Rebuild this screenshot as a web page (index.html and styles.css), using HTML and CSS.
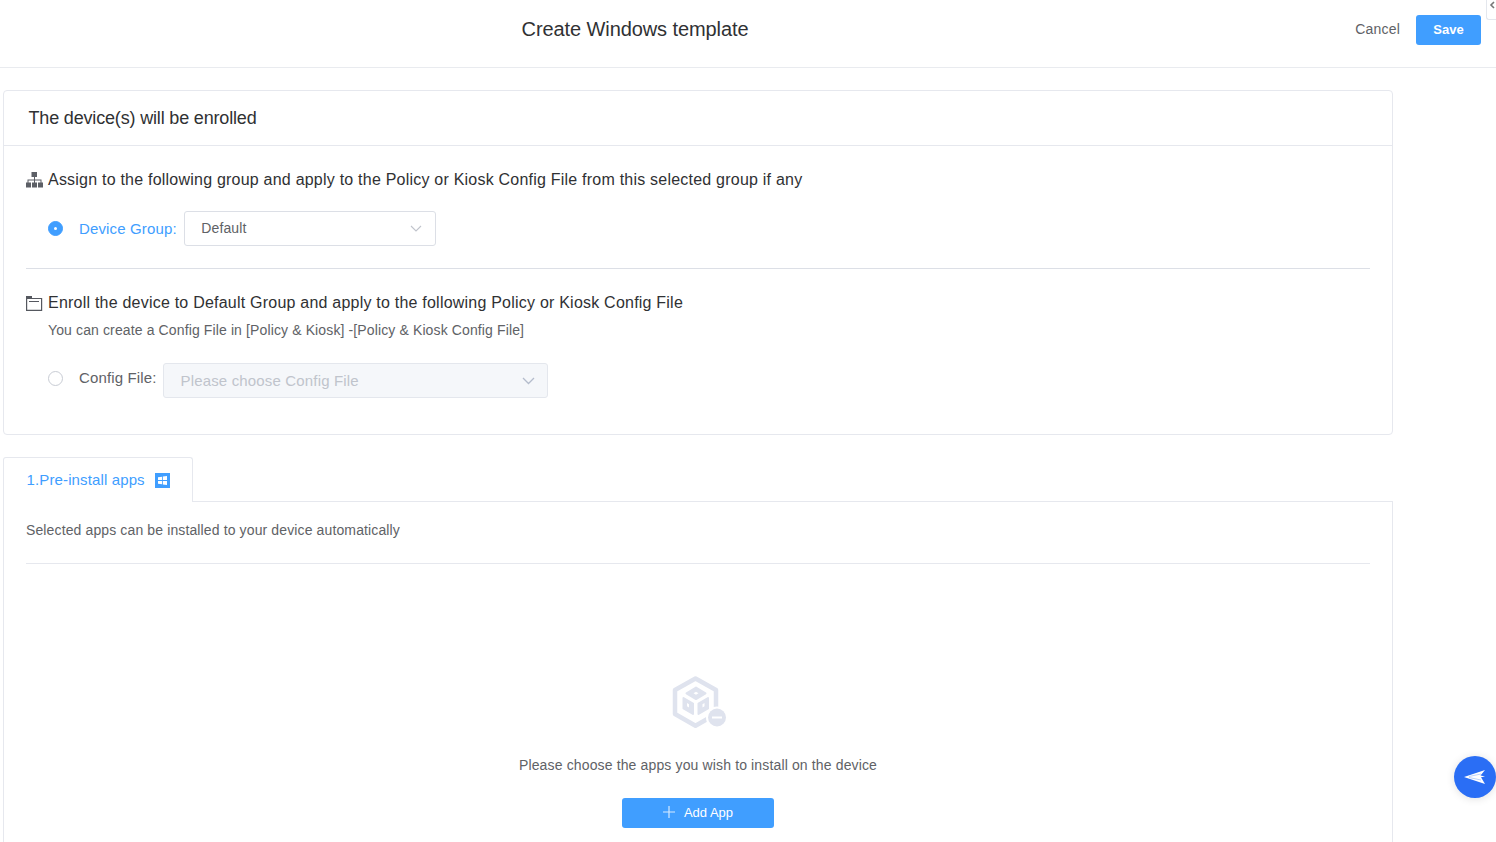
FILE: index.html
```html
<!DOCTYPE html>
<html lang="en">
<head>
<meta charset="utf-8">
<title>Create Windows template</title>
<link rel="stylesheet" href="styles.css">
</head>
<body>
<header class="topbar">
  <h1 class="title">Create Windows template</h1>
  <div class="actions">
    <a class="cancel">Cancel</a>
    <button class="btn save">Save</button>
  </div>
</header>
<div class="corner"><svg width="6" height="8" viewBox="0 0 6 8"><path d="M5 1 2 4l3 3" fill="none" stroke="#777" stroke-width="1.6"/></svg></div>
<main class="page">
  <section class="card">
    <h2 class="card-head">The device(s) will be enrolled</h2>
    <div class="card-body">
      <div class="block block-group">
        <div class="opt-title">
          <svg class="opt-icon" width="17" height="16" viewBox="0 0 17 16"><path d="M5.500 0H11v5H5.500zM8 5h1v2.500h6.500V10.500h-1V8.500H9v2H8v-2H2.500v2h-1V7.500H8zM0 10.500h5v5H0zM6 10.500h5v5H6zM12 10.500h5v5h-5z" fill="#5c5f66"/></svg>
          <span>Assign to the following group and apply to the Policy or Kiosk Config File from this selected group if any</span>
        </div>
        <div class="field field-group">
          <span class="radio radio-on"></span>
          <label class="label label-on">Device Group:</label>
          <div class="select select-group">
            <span class="select-value">Default</span>
            <svg width="12" height="7" viewBox="0 0 12 7"><path d="M1 1l5 5 5-5" fill="none" stroke="#c0c4cc" stroke-width="1.100"/></svg>
          </div>
        </div>
      </div>
      <div class="block block-config">
        <div class="opt-title">
          <svg class="opt-icon" width="17" height="15" viewBox="0 0 17 15"><path d="M.6 2.500h15v11.900H.6z" fill="none" stroke="#55585f" stroke-width="1.200"/><path d="M0 0h6v3H0zM3 5h10v1.100H3z" fill="#55585f"/></svg>
          <span>Enroll the device to Default Group and apply to the following Policy or Kiosk Config File</span>
        </div>
        <p class="hint">You can create a Config File in [Policy &amp; Kiosk] -[Policy &amp; Kiosk Config File]</p>
        <div class="field field-config">
          <span class="radio"></span>
          <label class="label">Config File:</label>
          <div class="select select-config">
            <span>Please choose Config File</span>
            <svg width="13" height="8" viewBox="0 0 13 8"><path d="M1 1l5.500 5.500L12 1" fill="none" stroke="#b4bccc" stroke-width="1.300"/></svg>
          </div>
        </div>
      </div>
    </div>
  </section>
  <div class="tabs">
    <div class="tab">
      <span class="tab-text">1.Pre-install apps</span>
      <svg class="win" width="15" height="15" viewBox="0 0 15 15"><rect width="15" height="15" fill="#409eff"/><path d="M3 4.300 7 3.700v3.400H3zM7.800 3.600 12 3v4.100H7.800zM3 7.900h4v3.400l-4-.6zM7.800 7.900H12V12l-4.200-.6z" fill="#fff"/></svg>
    </div>
  </div>
  <section class="panel">
    <p class="panel-desc">Selected apps can be installed to your device automatically</p>
    <div class="empty">
      <svg class="empty-icon" width="55" height="53" viewBox="0 0 55 53">
        <path d="M23.500 2.500 3 14v24l20.500 11.700L44 38V14z" fill="none" stroke="#dfe3ee" stroke-width="4.500" stroke-linejoin="round"/>
        <path d="M24 11.500l9.500 5.800-9.500 5.800-9.500-5.800z" fill="#dfe3ee" stroke="#dfe3ee" stroke-width="2" stroke-linejoin="round"/>
        <path d="M11.500 22l9.500 5.500V38l-9.500-5.500zM36 22l-9.500 5.500V38l9.500-5.500z" fill="#dfe3ee" stroke="#dfe3ee" stroke-width="2" stroke-linejoin="round"/>
        <path d="M24 15.800l2.500 1.500-2.500 1.500-2.500-1.500zM15 27l2 1.200v3.300l-2-1.200zM32.500 27l-2 1.200v3.300l2-1.200z" fill="#fff"/>
        <circle cx="45" cy="41.500" r="11" fill="#fff"/>
        <circle cx="45" cy="41.500" r="9" fill="#dfe3ee"/>
        <rect x="40" y="40.500" width="10" height="2" fill="#fff"/>
      </svg>
      <p class="empty-text">Please choose the apps you wish to install on the device</p>
      <button class="btn add">
        <svg width="12" height="12" viewBox="0 0 12 12"><path d="M6 0v12M0 6h12" stroke="#d5e9ff" stroke-width="1.200"/></svg>
        <span>Add App</span>
      </button>
    </div>
  </section>
</main>
<div class="fab">
  <svg width="24" height="18" viewBox="0 0 24 18"><path d="M1 9 22 2 17.500 7.500l4.500 1-4 .8L22 16z" fill="#fff"/><path d="M6 8.500 18 6M6 9.500l12 2.500" stroke="#7aa5f8" stroke-width=".5"/></svg>
</div>
</body>
</html>
```
FILE: styles.css
```css
* { box-sizing: border-box; }
html, body { margin: 0; height: 842px; overflow: hidden; background: #fff; }
body { font-family: "Liberation Sans", Arial, sans-serif; color: #303133; position: relative; }
p, h1, h2 { margin: 0; font-weight: 400; }

.topbar { height: 68px; border-bottom: 1px solid #e9ebef; display: flex; align-items: center; justify-content: flex-end; padding: 0 15px 8px 0; position: relative; }
.title { position: absolute; left: 0; width: 1270px; top: 17px; text-align: center; font-size: 20px; line-height: 24px; letter-spacing: -.09px; color: #303133; }
.actions { display: flex; align-items: center; gap: 16px; }
.cancel { font-size: 14px; letter-spacing: .2px; color: #606266; padding-bottom: 2px; }
.btn { border: 0; background: #409eff; color: #fff; font-family: inherit; border-radius: 3px; padding: 0; }
.save { width: 65px; height: 30px; font-size: 13px; font-weight: 700; }

.corner { position: absolute; right: 0; top: -10px; width: 10px; height: 30px; background: #fff; border: 1px solid #e4e7ed; border-right: 0; border-radius: 3px 0 0 3px; display: flex; align-items: center; justify-content: center; }

.page { padding: 22px 103px 0 3px; }
.card { border: 1px solid #e6e8ee; border-radius: 4px; height: 345px; }
.card-head { height: 55px; border-bottom: 1px solid #e6e8ee; padding-left: 24.500px; font-size: 18px; letter-spacing: -.17px; line-height: 54px; color: #303133; }
.card-body { padding: 0 22px; }
.block-group { height: 123px; border-bottom: 1px solid #dcdfe6; padding-top: 24px; }
.block-config { padding-top: 24px; }
.opt-title { display: flex; align-items: center; gap: 5px; font-size: 16px; letter-spacing: .22px; line-height: 20px; color: #303133; }
.opt-icon { flex: none; }
.hint { margin: 7px 0 0 22px; font-size: 14px; letter-spacing: .125px; line-height: 20px; color: #606266; }
.field { display: flex; align-items: center; }
.field-group { margin: 21px 0 0 22px; }
.field-config { margin: 23px 0 0 22px; }
.radio { width: 15px; height: 15px; border-radius: 50%; border: 1px solid #c8ccd4; background: #fff; flex: none; margin-right: 16px; }
.radio-on { background: #409eff; border-color: #409eff; position: relative; }
.radio-on::after { content: ""; position: absolute; left: 5px; top: 5px; width: 3px; height: 3px; border-radius: 50%; background: #fff; }
.label { font-size: 15px; letter-spacing: .14px; color: #606266; }
.label-on { color: #409eff; }
.select { display: flex; align-items: center; justify-content: space-between; border: 1px solid #dcdfe6; border-radius: 3px; background: #fff; }
.select-group { width: 252px; height: 35px; margin-left: 7px; padding: 0 13px 0 16.500px; font-size: 14px; letter-spacing: .14px; color: #606266; }
.select-value { padding-bottom: 2px; }
.select-config { width: 385px; height: 35px; margin-left: 6px; padding: 0 12px 0 17px; font-size: 15px; letter-spacing: .16px; color: #c0c4cc; background: #f5f7fa; border-color: #e4e7ed; }
.field-config .radio { position: relative; top: -2px; }
.field-config .label { position: relative; top: -3px; }

.tabs { margin-top: 22px; display: flex; height: 45px; }
.tab { width: 190px; height: 45px; border: 1px solid #e6e8ee; border-bottom: 0; border-radius: 3px 3px 0 0; background: #fff; display: flex; align-items: center; gap: 10px; padding-left: 22.500px; font-size: 15px; letter-spacing: .13px; color: #409eff; position: relative; z-index: 1; }
.tab-text { position: relative; top: -1px; }
.win { flex: none; }
.panel { border: 1px solid #e6e8ee; border-top: 1px solid #e6e8ee; margin-top: -1px; padding: 0 22px; height: 400px; }
.panel-desc { height: 62px; border-bottom: 1px solid #e6e8ee; font-size: 14px; letter-spacing: .125px; line-height: 56px; color: #606266; }
.empty { display: flex; flex-direction: column; align-items: center; padding-top: 112px; }
.empty-icon { margin-left: 3px; display: block; }
.empty-text { margin-top: 26px; font-size: 14px; letter-spacing: .14px; line-height: 20px; color: #606266; }
.add { margin-top: 23px; width: 152px; height: 30px; display: flex; align-items: center; justify-content: center; gap: 9px; font-size: 13px; padding-bottom: 2px; }
.fab { position: absolute; left: 1454px; top: 756px; width: 42px; height: 42px; border-radius: 50%; background: #2a6ef5; display: flex; align-items: center; justify-content: center; box-shadow: 0 1px 8px rgba(0,0,0,.12); }
```
